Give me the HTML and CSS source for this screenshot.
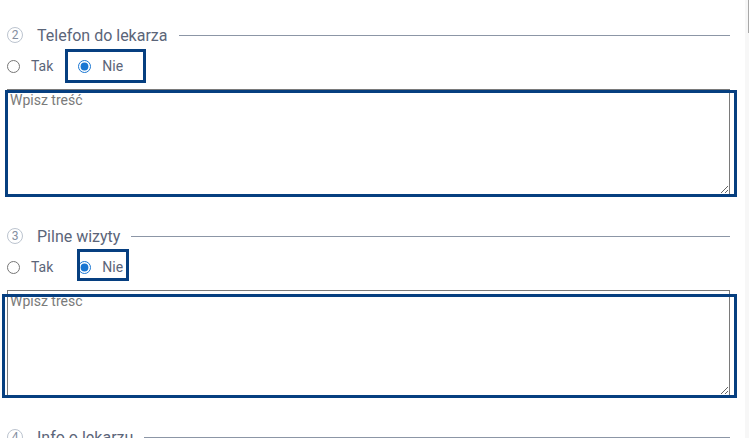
FILE: index.html
```html
<!DOCTYPE html>
<html lang="pl">
<head>
<meta charset="utf-8">
<title>Formularz</title>
<link rel="stylesheet" href="styles.css">
</head>
<body>
<div class="page">
  <main class="form">
    <section class="question">
      <div class="q-head">
        <span class="q-num">2</span>
        <span class="q-title">Telefon do lekarza</span>
        <span class="q-rule"></span>
      </div>
      <div class="q-options">
        <label class="opt"><input type="radio" name="q2"><span>Tak</span></label>
        <label class="opt opt-no hl-a"><input type="radio" name="q2" checked><span>Nie</span></label>
      </div>
      <div class="answer hl-ta-a">
        <textarea placeholder="Wpisz treść"></textarea>
      </div>
    </section>
    <section class="question">
      <div class="q-head">
        <span class="q-num">3</span>
        <span class="q-title">Pilne wizyty</span>
        <span class="q-rule"></span>
      </div>
      <div class="q-options">
        <label class="opt"><input type="radio" name="q3"><span>Tak</span></label>
        <label class="opt opt-no hl-b"><input type="radio" name="q3" checked><span>Nie</span></label>
      </div>
      <div class="answer hl-ta-b">
        <textarea placeholder="Wpisz treść"></textarea>
      </div>
    </section>
    <section class="question">
      <div class="q-head">
        <span class="q-num">4</span>
        <span class="q-title">Info o lekarzu</span>
        <span class="q-rule"></span>
      </div>
    </section>
  </main>
  <div class="scroll-track"><div class="scroll-thumb"></div></div>
</div>
</body>
</html>
```

FILE: styles.css
```css
html, body {
  margin: 0;
  padding: 0;
  height: 100%;
  overflow: hidden;
  background: #ffffff;
  font-family: Roboto, "Liberation Sans", Arial, sans-serif;
}

.page {
  display: flex;
  height: 438px;
}

.form {
  flex: 1;
  padding-top: 25px;
  padding-left: 7px;
}

.question {
  width: 723px;
  margin-bottom: 31px;
}

.q-head {
  display: flex;
  align-items: center;
  height: 20px;
}

.q-num {
  width: 16px;
  height: 16px;
  box-sizing: border-box;
  border: 1px solid #bcc4cf;
  border-radius: 50%;
  display: flex;
  align-items: center;
  justify-content: center;
  font-size: 12px;
  color: #848e9f;
  line-height: 1;
}

.q-title {
  margin-left: 14px;
  font-size: 16px;
  color: #5b6579;
  white-space: nowrap;
}

.q-rule {
  flex: 1;
  height: 1px;
  background: #8c96a6;
  margin-left: 11px;
}

.q-options {
  display: flex;
  align-items: center;
  height: 20px;
  margin-top: 11px;
}

.opt {
  position: relative;
  display: flex;
  align-items: center;
  font-size: 14px;
  color: #5b6579;
  height: 20px;
}

.opt input {
  margin: 0;
  width: 13px;
  height: 13px;
  accent-color: #1976d2;
}

.opt span {
  margin-left: 11px;
}

.opt-no {
  margin-left: 25px;
}

.hl-a::after,
.hl-b::after,
.hl-ta-a::after,
.hl-ta-b::after {
  content: "";
  position: absolute;
  box-sizing: border-box;
  border: 3px solid #063f80;
  pointer-events: none;
}

.hl-a::after {
  left: -13px;
  top: -7px;
  width: 81px;
  height: 34px;
}

.hl-b::after {
  left: -1px;
  top: -8px;
  width: 52px;
  height: 32px;
}

.answer {
  position: relative;
  margin-top: 13px;
}

.answer textarea {
  display: block;
  box-sizing: border-box;
  width: 723px;
  height: 106px;
  margin: 0;
  padding: 2px;
  border: 1px solid #7a7a7a;
  font-family: Roboto, "Liberation Sans", Arial, sans-serif;
  font-size: 14px;
  color: #333;
  background: #fff;
}

.answer textarea::placeholder {
  color: #7a7a7a;
}

.hl-ta-a::after {
  left: -2px;
  top: 1px;
  width: 732px;
  height: 107px;
}

.hl-ta-b::after {
  left: -5px;
  top: 4px;
  width: 735px;
  height: 104px;
}

.scroll-track {
  width: 4px;
  background: #f7f7f7;
  display: flex;
  justify-content: flex-end;
  align-items: flex-start;
}

.scroll-thumb {
  width: 1px;
  height: 33px;
  background: #a8a8a8;
}
```
